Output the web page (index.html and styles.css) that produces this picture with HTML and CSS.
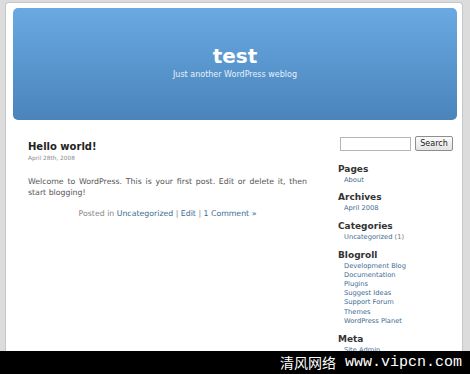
FILE: index.html
```html
<!DOCTYPE html>
<html lang="en">
<head>
<meta charset="utf-8">
<title>test</title>
<link rel="stylesheet" href="styles.css">
</head>
<body>
<div class="page">
  <header class="header">
    <h1 class="site-title">test</h1>
    <div class="site-desc">Just another WordPress weblog</div>
  </header>
  <div class="content">
    <main class="main">
      <h2 class="post-title">Hello world!</h2>
      <div class="post-date">April 28th, 2008</div>
      <p class="post-body">Welcome to WordPress. This is your first post. Edit or delete it, then start blogging!</p>
      <p class="post-meta">Posted in <a class="link">Uncategorized</a> | <a class="link">Edit</a> | <a class="link">1 Comment »</a></p>
    </main>
    <aside class="sidebar">
      <form class="search">
        <input class="search-input" type="text">
        <button class="search-btn" type="button">Search</button>
      </form>
      <section class="widget">
        <h3 class="widget-title">Pages</h3>
        <ul class="widget-list"><li><a class="link">About</a></li></ul>
      </section>
      <section class="widget">
        <h3 class="widget-title">Archives</h3>
        <ul class="widget-list"><li><a class="link">April 2008</a></li></ul>
      </section>
      <section class="widget">
        <h3 class="widget-title">Categories</h3>
        <ul class="widget-list"><li><a class="link">Uncategorized</a> <span class="count">(1)</span></li></ul>
      </section>
      <section class="widget">
        <h3 class="widget-title">Blogroll</h3>
        <ul class="widget-list">
          <li><a class="link">Development Blog</a></li>
          <li><a class="link">Documentation</a></li>
          <li><a class="link">Plugins</a></li>
          <li><a class="link">Suggest Ideas</a></li>
          <li><a class="link">Support Forum</a></li>
          <li><a class="link">Themes</a></li>
          <li><a class="link">WordPress Planet</a></li>
        </ul>
      </section>
      <section class="widget">
        <h3 class="widget-title">Meta</h3>
        <ul class="widget-list"><li><a class="link">Site Admin</a></li></ul>
      </section>
    </aside>
  </div>
</div>
<div class="watermark"><span class="wm-cn">清风网络</span><span class="wm-url">&nbsp;www.vipcn.com</span></div>
</body>
</html>
```

FILE: styles.css
```css
html, body {
  margin: 0;
  height: 374px;
  overflow: hidden;
}
body {
  display: flex;
  flex-direction: column;
  background: #dcdcdc;
  font-family: "DejaVu Sans", Verdana, sans-serif;
  color: #333;
}
.page {
  flex: 1;
  min-height: 0;
  overflow: hidden;
  margin: 2px 7px 0 5px;
  padding: 5px 5px 0 7px;
  background: #fff;
  border: 1px solid #c6c6c6;
  border-bottom: none;
  border-radius: 4px 4px 0 0;
}
.header {
  height: 112px;
  box-sizing: border-box;
  padding-top: 36px;
  border-radius: 5px;
  background: linear-gradient(#6aa9e2, #4a84bb);
  text-align: center;
  color: #fff;
}
.site-title {
  margin: 0;
  font-size: 20px;
  line-height: 24px;
  font-weight: bold;
}
.site-desc {
  margin-top: 2px;
  font-size: 8px;
  line-height: 10px;
  color: #e6f0fa;
}
.content {
  display: grid;
  grid-template-columns: 279px 1fr;
  column-gap: 31px;
  padding-left: 15px;
}
.main {
  padding-top: 21px;
}
.post-title {
  margin: 0;
  font-size: 10px;
  line-height: 12px;
  font-weight: bold;
  color: #222;
}
.post-date {
  margin-top: 2px;
  font-size: 5.8px;
  line-height: 7px;
  color: #888;
}
.post-body {
  margin: 13.5px 0 0;
  font-size: 7.8px;
  line-height: 11px;
  text-align: justify;
  color: #555;
}
.post-meta {
  margin: 11.5px 0 0;
  font-size: 7.8px;
  line-height: 10px;
  text-align: center;
  color: #888;
}
.link {
  color: #3d6c94;
  text-decoration: none;
}
.sidebar {
  padding-top: 16px;
}
.search {
  display: flex;
  align-items: flex-start;
  gap: 4px;
  margin: 0 0 12.5px 2px;
}
.search-input {
  box-sizing: border-box;
  width: 71px;
  height: 14px;
  margin: 1px 0 0;
  padding: 0;
  border: 1px solid #b5b5b5;
  background: #fff;
}
.search-btn {
  box-sizing: border-box;
  width: 38px;
  height: 15px;
  margin: 0;
  padding: 0;
  border: 1px solid #8e8e8e;
  border-radius: 2px;
  background: linear-gradient(#fbfbfb, #e3e3e3);
  font-family: "DejaVu Sans", Verdana, sans-serif;
  font-size: 8px;
  color: #222;
}
.widget {
  margin-bottom: 7.5px;
}
.widget-title {
  margin: 0 0 1px;
  font-size: 9px;
  line-height: 11px;
  font-weight: bold;
  color: #333;
}
.widget-list {
  list-style: none;
  margin: 0;
  padding: 0 0 0 6px;
  font-size: 6.7px;
  line-height: 9.2px;
}
.count {
  color: #777;
}
.watermark {
  flex: 0 0 23px;
  display: flex;
  align-items: center;
  justify-content: flex-end;
  padding-right: 8px;
  background: #000;
  color: #fff;
  line-height: 23px;
}
.wm-cn {
  font-family: "Noto Sans CJK SC", sans-serif;
  font-size: 14px;
}
.wm-url {
  font-family: "Liberation Mono", monospace;
  font-size: 15px;
}
```
